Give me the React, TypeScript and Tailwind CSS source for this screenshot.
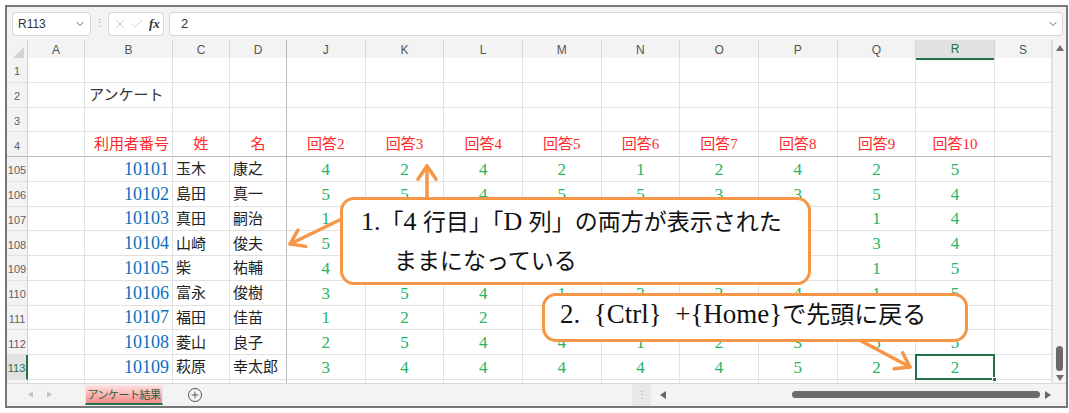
import React from 'react';
import { ChevronDown, X, Check, Plus } from 'lucide-react';

const GRID = 'grid grid-cols-[21px_57px_88px_57px_57px_repeat(9,78.67px)_57px]';
const SERIF = "font-['Liberation_Serif','Noto_Sans_CJK_JP',serif]";
const GOTHIC = "font-['Noto_Sans_CJK_JP','Liberation_Sans',sans-serif]";
const UI = "font-['Liberation_Sans','Noto_Sans_CJK_JP',sans-serif]";

const letters = ['A', 'B', 'C', 'D', 'J', 'K', 'L', 'M', 'N', 'O', 'P', 'Q', 'R', 'S'];

interface Row {
  n: number;
  id: string;
  sei: string;
  mei: string;
  v: number[];
}

const data: Row[] = [
  { n: 105, id: '10101', sei: '玉木', mei: '康之', v: [4, 2, 4, 2, 1, 2, 4, 2, 5] },
  { n: 106, id: '10102', sei: '島田', mei: '真一', v: [5, 5, 4, 5, 5, 3, 3, 5, 4] },
  { n: 107, id: '10103', sei: '真田', mei: '嗣治', v: [1, 2, 3, 4, 2, 5, 1, 1, 4] },
  { n: 108, id: '10104', sei: '山崎', mei: '俊夫', v: [5, 4, 3, 2, 4, 1, 2, 3, 4] },
  { n: 109, id: '10105', sei: '柴', mei: '祐輔', v: [4, 3, 5, 1, 2, 4, 3, 1, 5] },
  { n: 110, id: '10106', sei: '富永', mei: '俊樹', v: [3, 5, 4, 1, 3, 2, 4, 1, 5] },
  { n: 111, id: '10107', sei: '福田', mei: '佳苗', v: [1, 2, 2, 3, 5, 4, 2, 4, 3] },
  { n: 112, id: '10108', sei: '菱山', mei: '良子', v: [2, 5, 4, 4, 1, 2, 3, 5, 5] },
  { n: 113, id: '10109', sei: '萩原', mei: '幸太郎', v: [3, 4, 4, 4, 4, 4, 5, 2, 2] },
];

const Tri = ({ dir, className }: { dir: 'up' | 'down' | 'left' | 'right'; className?: string }) => {
  const pts = { up: '0,6 4,0 8,6', down: '0,0 8,0 4,6', left: '6,0 6,8 0,4', right: '0,0 0,8 6,4' }[dir];
  const box = dir === 'up' || dir === 'down' ? '0 0 8 6' : '0 0 6 8';
  return (
    <svg viewBox={box} className={className}>
      <polygon points={pts} fill="currentColor" />
    </svg>
  );
};

// cell border: frozen column D and frozen row 4 get the darker line
const cellCls = (ci: number, frozen: boolean) =>
  `flex items-end pb-[1px] border-r border-b overflow-visible whitespace-nowrap ${
    ci === 3 ? 'border-r-[#b9b9b9]' : 'border-r-[#e1e1e1]'
  } ${frozen ? 'border-b-[#b9b9b9]' : 'border-b-[#e1e1e1]'}`;

const RowHead = ({ label, frozen, active }: { label: string; frozen?: boolean; active?: boolean }) => (
  <div
    className={`${UI} flex items-end justify-center pb-[2px] text-[11px] border-b ${
      frozen ? 'border-b-[#b9b9b9]' : 'border-b-[#e1e1e1]'
    } ${
      active
        ? 'bg-[#e2e2e2] text-[#217346] border-r-2 border-r-[#217346]'
        : 'bg-[#f3f3f3] text-[#5f5f5f] border-r border-r-[#d2d2d2]'
    }`}
  >
    {label}
  </div>
);

const Arrow = ({ x1, y1, x2, y2 }: { x1: number; y1: number; x2: number; y2: number }) => {
  const a = Math.atan2(y2 - y1, x2 - x1);
  const L = 16;
  const s = 0.6;
  const p1 = `${x2 - L * Math.cos(a - s)},${y2 - L * Math.sin(a - s)}`;
  const p2 = `${x2 - L * Math.cos(a + s)},${y2 - L * Math.sin(a + s)}`;
  return (
    <g stroke="#f79646" strokeWidth={3.5} strokeLinecap="round" strokeLinejoin="round" fill="none">
      <line x1={x1} y1={y1} x2={x2} y2={y2} />
      <polyline points={`${p1} ${x2},${y2} ${p2}`} />
    </g>
  );
};

export default function App() {
  const topRows: { n: number; cells: (string | null)[] }[] = [
    { n: 1, cells: [] },
    { n: 2, cells: [null, 'アンケート'] },
    { n: 3, cells: [] },
    {
      n: 4,
      cells: [null, '利用者番号', '姓', '名', '回答2', '回答3', '回答4', '回答5', '回答6', '回答7', '回答8', '回答9', '回答10'],
    },
  ];

  return (
    <div className="relative w-[1069px] h-[413px] bg-white overflow-hidden pl-[5px] pt-[5px]">
      <div className="w-[1063px] h-[403px] border-2 border-[#777777] flex flex-col bg-[#f3f3f3]">
        {/* formula bar */}
        <div className={`${UI} h-[33px] flex items-center pl-[5px] pr-[3px]`}>
          <div className="w-[79px] h-[24px] rounded-[4px] border border-[#d6d6d6] bg-white flex items-center justify-between pl-[5px] pr-[4px]">
            <span className="text-[12px] text-[#333]">R113</span>
            <ChevronDown className="w-[12px] h-[12px] text-[#555]" strokeWidth={1.8} />
          </div>
          <div className="w-[17px] flex justify-center text-[#a0a0a0] text-[11px]">⋮</div>
          <div className="w-[56px] h-[24px] rounded-[4px] border border-[#d6d6d6] bg-white flex items-center pl-[4px] gap-[3px]">
            <X className="w-[14px] h-[14px] text-[#c4c4c4]" strokeWidth={1.3} />
            <Check className="w-[14px] h-[14px] text-[#c4c4c4]" strokeWidth={1.3} />
            <span className="font-['Liberation_Serif',serif] italic font-bold text-[13px] text-[#333] ml-[2px]">fx</span>
          </div>
          <div className="ml-[5px] flex-1 h-[24px] rounded-[4px] border border-[#d6d6d6] bg-white flex items-center justify-between pl-[11px] pr-[3px]">
            <span className="text-[13px] text-[#333]">2</span>
            <ChevronDown className="w-[12px] h-[12px] text-[#555]" strokeWidth={1.8} />
          </div>
        </div>

        {/* sheet + vertical scrollbar */}
        <div className="flex">
          <div className="w-[1045px] bg-white">
            {/* column headers */}
            <div className={`${GRID} h-[18px] bg-[#f3f3f3] ${UI} text-[12px] text-[#555]`}>
              <div className="flex items-end justify-end pr-[3px] pb-[2px] border-r border-[#d2d2d2]">
                <svg viewBox="0 0 10 10" className="w-[11px] h-[11px]">
                  <polygon points="10,0 10,10 0,10" fill="#d3d3d3" />
                </svg>
              </div>
              {letters.map((l, i) =>
                l === 'R' ? (
                  <div
                    key={l}
                    className="flex items-center justify-center bg-[#e1e1e1] text-[#217346] border-r border-r-[#d2d2d2] border-b-2 border-b-[#217346]"
                  >
                    {l}
                  </div>
                ) : (
                  <div
                    key={l}
                    className={`flex items-center justify-center border-r ${i === 3 ? 'border-r-[#b9b9b9]' : 'border-r-[#d8d8d8]'}`}
                  >
                    {l}
                  </div>
                )
              )}
            </div>

            {/* frozen rows 1-4 */}
            {topRows.map((r) => (
              <div key={r.n} className={`${GRID} h-[24.75px]`}>
                <RowHead label={String(r.n)} frozen={r.n === 4} />
                {letters.map((l, ci) => {
                  const t = r.cells[ci] ?? null;
                  const frozen = r.n === 4;
                  if (!t) return <div key={l} className={cellCls(ci, frozen)} />;
                  if (r.n === 2)
                    return (
                      <div key={l} className={`${cellCls(ci, frozen)} ${GOTHIC} text-[15px] text-[#333] pl-[4px]`}>
                        {t}
                      </div>
                    );
                  return (
                    <div
                      key={l}
                      className={`${cellCls(ci, frozen)} ${SERIF} text-[15px] text-[#ff2a2a] ${
                        ci === 1 ? 'justify-end pr-[3px]' : 'justify-center'
                      }`}
                    >
                      {t}
                    </div>
                  );
                })}
              </div>
            ))}

            {/* data rows */}
            {data.map((r) => (
              <div key={r.n} className={`${GRID} h-[24.75px]`}>
                <RowHead label={String(r.n)} active={r.n === 113} />
                <div className={cellCls(0, false)} />
                <div className={`${cellCls(1, false)} ${SERIF} justify-end pr-[3px] text-[18px] leading-[21px] text-[#0a6fc2]`}>
                  {r.id}
                </div>
                <div className={`${cellCls(2, false)} ${GOTHIC} pl-[3px] text-[15px] text-[#222]`}>{r.sei}</div>
                <div className={`${cellCls(3, false)} ${GOTHIC} pl-[3px] text-[15px] text-[#222]`}>{r.mei}</div>
                {r.v.map((v, i) => (
                  <div
                    key={i}
                    className={`${cellCls(4 + i, false)} relative ${SERIF} justify-center text-[17px] leading-[21px] text-[#27b463]`}
                  >
                    {v}
                    {r.n === 113 && i === 8 && (
                      <>
                        <div className="absolute -left-[1px] -top-[1px] -right-[1px] -bottom-[1px] border-2 border-[#217346]" />
                        <div className="absolute -right-[3px] -bottom-[3px] w-[5px] h-[5px] bg-[#217346] border border-white" />
                      </>
                    )}
                  </div>
                ))}
                <div className={cellCls(13, false)} />
              </div>
            ))}

            {/* sliver of next row */}
            <div className={`${GRID} h-[3px]`}>
              <div className="bg-[#f3f3f3] border-r border-[#d2d2d2]" />
              {letters.map((l, ci) => (
                <div key={l} className={`border-r ${ci === 3 ? 'border-r-[#b9b9b9]' : 'border-r-[#e1e1e1]'}`} />
              ))}
            </div>
          </div>

          {/* vertical scrollbar */}
          <div className="w-[14px] bg-[#f5f5f5] border-l border-[#e0e0e0] flex flex-col items-center pt-[5px] pb-[2px] text-[#6f6f6f]">
            <Tri dir="up" className="w-[8px] h-[6px]" />
            <div className="flex-1" />
            <div className="w-[7px] h-[25px] rounded-full bg-[#6b6b6b]" />
            <Tri dir="down" className="w-[8px] h-[6px] mt-[4px]" />
          </div>
        </div>

        {/* sheet tabs + horizontal scrollbar */}
        <div className="flex-1 flex items-start bg-[#f3f3f3] border-t border-[#d9d9d9]">
          <div className="w-[78px] h-full flex items-center pl-[21px] gap-[14px] text-[#c4c4c4]">
            <Tri dir="left" className="w-[5px] h-[7px]" />
            <Tri dir="right" className="w-[5px] h-[7px]" />
          </div>
          <div className="w-[78px] h-[20px] mt-[1px] bg-gradient-to-b from-[#fde2e2] to-[#f28b8b] border-x border-[#e8e8e8] border-b-2 border-b-[#217346] flex items-center justify-center">
            <span className={`${GOTHIC} text-[11px] text-[#2f5e3c] tracking-[-0.5px]`}>アンケート結果</span>
          </div>
          <div className="ml-[25px] h-full flex items-center">
            <div className="w-[14px] h-[14px] rounded-full border border-[#555] flex items-center justify-center">
              <Plus className="w-[10px] h-[10px] text-[#444]" strokeWidth={2} />
            </div>
          </div>
          <div className="ml-auto w-[434px] h-full flex items-center text-[#666]">
            <div className="w-[19px] h-full bg-[#e8e8e8] flex items-center justify-center text-[10px] text-[#aaa]">⋮</div>
            <Tri dir="left" className="ml-[9px] w-[6px] h-[8px]" />
            <div className="ml-[126px] w-[248px] h-[7px] rounded-full bg-[#6b6b6b]" />
            <Tri dir="right" className="ml-[5px] w-[6px] h-[8px]" />
          </div>
        </div>
      </div>

      {/* callout arrows */}
      <svg className="absolute left-0 top-0 w-[1069px] h-[413px] pointer-events-none" viewBox="0 0 1069 413">
        <Arrow x1={427} y1={205} x2={427} y2={166} />
        <Arrow x1={350} y1={215} x2={290} y2={244} />
        <Arrow x1={850} y1={335} x2={910} y2={367} />
      </svg>

      {/* callout 1 */}
      <div className={`absolute left-[340px] top-[197px] w-[471px] h-[88px] bg-white border-[3px] border-[#f79646] rounded-[14px] ${SERIF} text-[23px] text-[#111] pl-[18px] pt-[2px] leading-[39px]`}>
        <div className="whitespace-nowrap">
          <span className="text-[26px]">1.</span>「<span className="text-[26px]">4 </span>行目」「<span className="text-[26px]">D </span>列」の両方が表示された
        </div>
        <div className="whitespace-nowrap pl-[33px]">ままになっている</div>
      </div>

      {/* callout 2 */}
      <div className={`absolute left-[542px] top-[293px] w-[426px] h-[49px] bg-white border-[3px] border-[#f79646] rounded-[14px] ${SERIF} text-[24px] text-[#111] pl-[15px] flex items-center pb-[7px]`}>
        <span className="whitespace-pre">
          <span className="text-[27px]">2.  {'{Ctrl}'}  +{'{Home}'}</span>で先頭に戻る
        </span>
      </div>
    </div>
  );
}
